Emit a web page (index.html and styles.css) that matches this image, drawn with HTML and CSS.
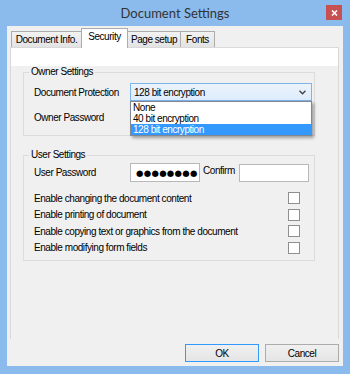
FILE: index.html
```html
<!DOCTYPE html>
<html>
<head>
<meta charset="utf-8">
<link rel="stylesheet" href="styles.css">
</head>
<body>
<div class="window">
  <div class="titlebar">
    <span></span>
    <div class="title">Document Settings</div>
    <div class="close"><svg width="7" height="6" viewBox="0 0 7 6"><path d="M1 0.5 L6 5.5 M6 0.5 L1 5.5" stroke="#fff" stroke-width="1.6"/></svg></div>
  </div>
  <div class="client">
    <div class="tabs">
      <div class="tab t1">Document Info.</div>
      <div class="tab sel t2">Security</div>
      <div class="tab t3">Page setup</div>
      <div class="tab t4">Fonts</div>
    </div>
    <div class="panel">
      <div class="page">
        <fieldset class="group owner">
          <legend>Owner Settings</legend>
          <div class="row r-prot">
            <span class="lbl">Document Protection</span>
            <div class="combo-wrap">
              <div class="combo"><span>128 bit encryption</span><svg class="chev" width="7" height="5" viewBox="0 0 7 5"><path d="M0.5 0.8 L3.5 3.8 L6.5 0.8" fill="none" stroke="#404040" stroke-width="1.3"/></svg></div>
              <ul class="list">
                <li>None</li>
                <li>40 bit encryption</li>
                <li class="hl">128 bit encryption</li>
              </ul>
            </div>
          </div>
          <div class="row r-opw">
            <span class="lbl">Owner Password</span>
            <div class="field opw"></div>
          </div>
        </fieldset>
        <fieldset class="group user">
          <legend>User Settings</legend>
          <div class="row r-upw">
            <span class="lbl">User Password</span>
            <div class="field pwd"><span class="dots">●●●●●●●●</span></div>
            <span class="confirm">Confirm</span>
            <div class="field cfm"></div>
          </div>
          <div class="row chk"><span>Enable changing the document content</span><span class="cb"></span></div>
          <div class="row chk"><span>Enable printing of document</span><span class="cb"></span></div>
          <div class="row chk"><span>Enable copying text or graphics from the document</span><span class="cb"></span></div>
          <div class="row chk"><span>Enable modifying form fields</span><span class="cb"></span></div>
        </fieldset>
      </div>
    </div>
    <div class="buttons">
      <button class="btn default">OK</button>
      <button class="btn">Cancel</button>
    </div>
  </div>
</div>
</body>
</html>
```
FILE: styles.css
```css
* { box-sizing: border-box; }
html, body { margin: 0; padding: 0; }
body {
  width: 350px;
  height: 374px;
  overflow: hidden;
  background: #8bbbec;
  font-family: "Liberation Sans", Arial, sans-serif;
  font-size: 10px;
  letter-spacing: -0.45px;
  color: #000;
}
.window {
  height: 374px;
  padding: 0 7px 8px;
  display: flex;
  flex-direction: column;
}
.titlebar {
  height: 26px;
  flex: none;
  display: grid;
  grid-template-columns: 1fr auto 1fr;
  align-items: start;
}
.title {
  font-family: "Lato", "Open Sans", sans-serif;
  font-size: 13px;
  letter-spacing: 0;
  line-height: 26px;
  color: #333;
}
.close {
  justify-self: end;
  margin: 5px 1px 0 0;
  width: 16px;
  height: 15px;
  background: #c75050;
  display: flex;
  align-items: center;
  justify-content: center;
}
.client {
  flex: 1;
  background: #f0f0f0;
  padding: 2px 4px 0 3px;
  display: flex;
  flex-direction: column;
}
.tabs {
  height: 19px;
  flex: none;
  display: flex;
  align-items: flex-end;
  padding-left: 1px;
}
.tab {
  height: 16px;
  border: 1px solid #acacac;
  border-bottom: none;
  background: linear-gradient(#f2f2f2, #e3e3e3);
  line-height: 15px;
  text-align: center;
  white-space: nowrap;
}
.tab + .tab { margin-left: -1px; }
.t1 { width: 71px; }
.t2 { width: 47px; }
.t3 { width: 54px; }
.t4 { width: 35px; }
.tab.sel {
  height: 20px;
  margin-bottom: -1px;
  background: #fff;
  position: relative;
  z-index: 1;
  line-height: 16px;
}
.panel {
  height: 292px;
  flex: none;
  border: 1px solid #d9d9d9;
  background: #fff;
  padding: 6px 0;
}
.page {
  height: 100%;
  background: #f0f0f0;
  padding-left: 12px;
}
.group {
  width: 292px;
  min-width: 0;
  margin: 0;
  padding: 0 0 10px;
  border: 1px solid #dcdcdc;
}
.group legend {
  padding: 0 2px;
  margin-left: 5px;
  line-height: 12px;
}
.owner { margin-top: 12px; }
.user { margin-top: 13px; padding-bottom: 4px; }
.row {
  display: flex;
  align-items: center;
  padding-left: 10px;
  white-space: nowrap;
}
.lbl { width: 96px; flex: none; }
.r-prot { margin-top: 5px; height: 18px; position: relative; z-index: 3; }
.r-opw { margin-top: 8px; height: 16px; }
.combo-wrap { position: relative; width: 182px; height: 18px; }
.combo {
  height: 18px;
  border: 1px solid #7eb4ea;
  background: linear-gradient(#ecf4fc, #dcecfc);
  display: flex;
  align-items: center;
  justify-content: space-between;
  padding: 0 3px 0 3px;
}
.chev { margin-right: 2px; }
.list {
  position: absolute;
  left: 0;
  top: 100%;
  width: 182px;
  margin: 0;
  padding: 0;
  list-style: none;
  background: #fff;
  border: 1px solid #828790;
  box-shadow: 2px 2px 3px rgba(0, 0, 0, 0.35);
}
.list li {
  height: 11px;
  line-height: 11px;
  padding-left: 2px;
  white-space: nowrap;
}
.list li.hl { background: #3399ff; color: #fff; }
.field {
  height: 19px;
  border: 1px solid #b8b8b8;
  background: #fff;
  flex: none;
}
.opw { width: 182px; }
.r-upw { margin-top: 2px; height: 19px; }
.pwd { width: 70px; display: flex; align-items: center; padding-left: 5px; }
.dots {
  font-family: "DejaVu Sans", sans-serif;
  font-size: 8.5px;
  letter-spacing: 0.3px;
  line-height: 10px;
}
.confirm { width: 36px; margin-left: 3px; align-self: flex-start; line-height: 15px; }
.cfm { width: 70px; height: 18px; margin-top: 1px; }
.chk { height: 16.5px; }
.r-upw + .chk { margin-top: 8px; }
.cb {
  width: 12px;
  height: 12px;
  margin-left: auto;
  margin-right: 14px;
  border: 1px solid #8f8f8f;
  background: #fff;
  flex: none;
}
.buttons {
  flex: none;
  display: flex;
  justify-content: flex-end;
  gap: 6px;
  margin-top: 5px;
}
.btn {
  width: 74px;
  height: 18px;
  margin: 0;
  padding: 0;
  border: 1px solid #acacac;
  background: linear-gradient(#f0f0f0, #e5e5e5);
  font-family: inherit;
  font-size: 10px;
  letter-spacing: -0.45px;
  color: #000;
}
.btn.default { border-color: #3399ff; }
```
